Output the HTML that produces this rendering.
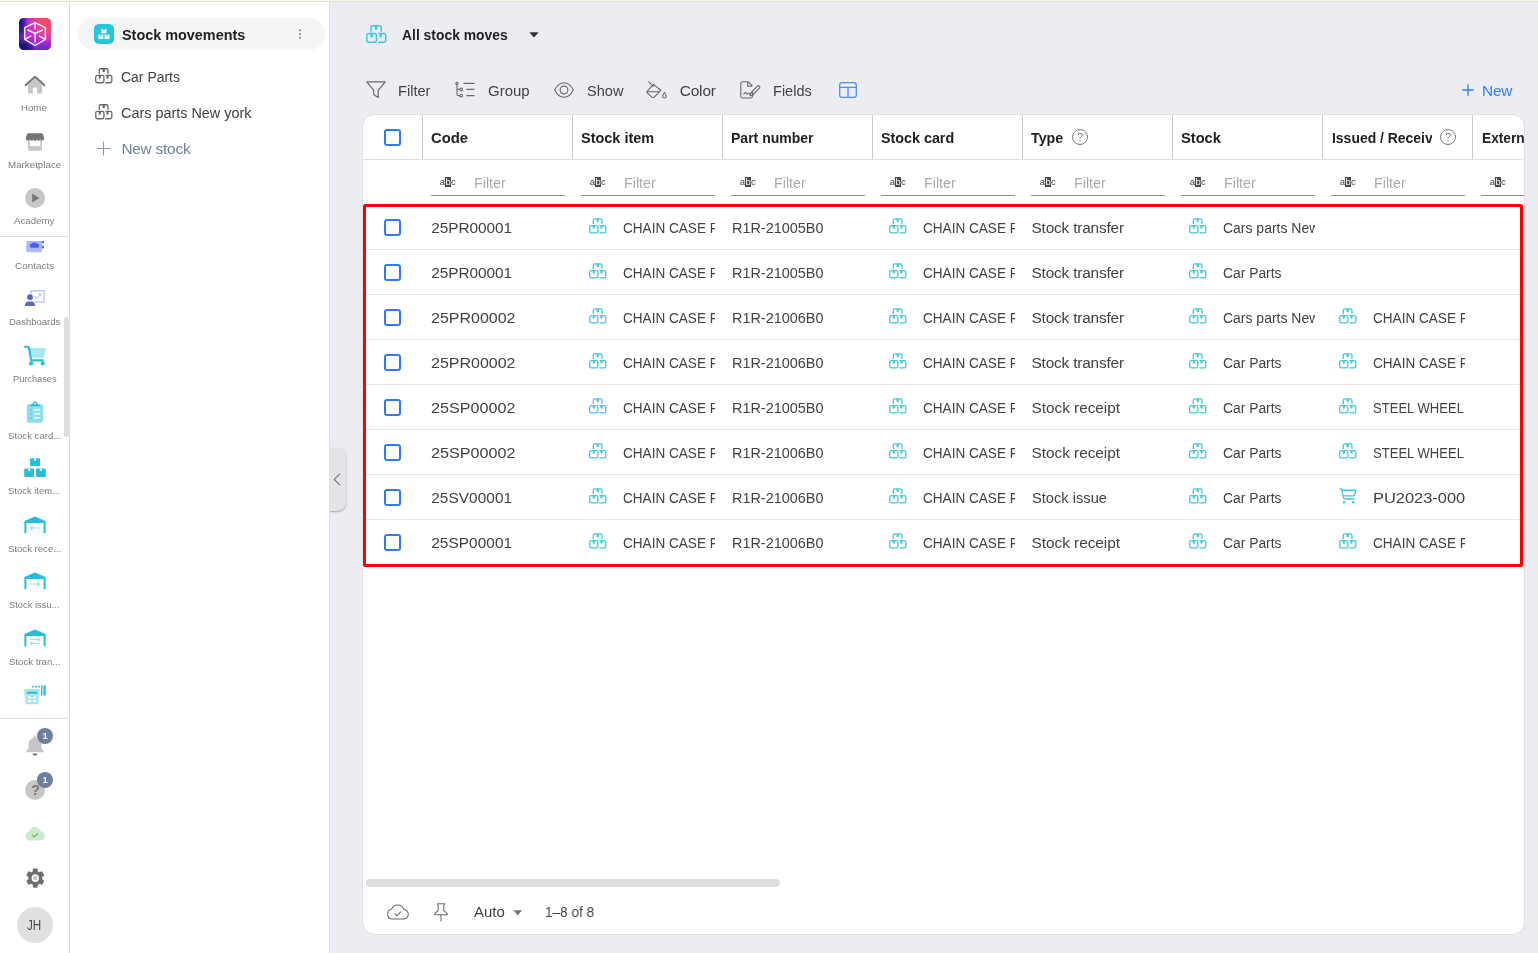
<!DOCTYPE html>
<html lang="en"><head><meta charset="utf-8"><title>Stock movements</title>
<style>
*{box-sizing:border-box;margin:0;padding:0}
html,body{width:1538px;height:953px;overflow:hidden;background:#ecedf3;font-family:"Liberation Sans",sans-serif;}
#app{position:absolute;left:0;top:0;width:1538px;height:953px;will-change:transform}
.t{position:absolute;white-space:nowrap;line-height:1;display:block}
.a{position:absolute;display:block}
svg{position:absolute;display:block;overflow:visible}
.clip{position:absolute;overflow:hidden;top:0;height:953px}
</style></head>
<body><div id="app">
<div class="a" style="left:0;top:0;width:69px;height:953px;background:#fff"></div>
<div class="a" style="left:69px;top:0;width:1px;height:953px;background:#e0e0e0"></div>
<div class="a" style="left:70px;top:0;width:259px;height:953px;background:#fff"></div>
<div class="a" style="left:329px;top:0;width:1px;height:953px;background:#e0e0e1"></div>
<div class="a" style="left:19px;top:18px;width:32px;height:32px;border-radius:4.500px;background:radial-gradient(ellipse 84% 85% at 100% 0%,#f2486a 0%,#f0486c 42%,rgba(236,72,128,.75) 62%,rgba(220,60,190,0) 100%),radial-gradient(ellipse 45% 42% at 8% 100%,#17126f 0%,#1d1683 45%,rgba(40,25,150,0) 100%),radial-gradient(ellipse 30% 70% at 0% 15%,#1b1580 0%,#2a1a9a 40%,rgba(60,30,180,0) 100%),linear-gradient(180deg,#b624e8 0%,#c02ae6 55%,#8a28d6 85%,#6e24c8 100%)"></div>
<svg style="left:19px;top:18px" width="32" height="32" viewBox="0 0 32 32" fill="none" stroke="#fff" stroke-opacity=".93" stroke-width="1.450" stroke-linejoin="round" stroke-linecap="round"><path d="M16.100 4.600L26.400 9.600V21.300L16.100 27.500 5.800 21.300V9.600z"/><path d="M16.100 15.500l7.400-3.500M16.100 15.500L8.800 12M16.100 15.500v8.800M16.100 5v5.700M6.200 21.200l5.600-3.100M26 21.200l-5.600-3.100"/></svg>
<svg style="left:24px;top:75px" width="22" height="20" viewBox="0 0 22 20"><path d="M4 9.5L11 3.2l7 6.3V17a1.6 1.6 0 0 1-1.6 1.6H13.2V13.4a1 1 0 0 0-1-1H9.8a1 1 0 0 0-1 1v5.2H5.6A1.6 1.6 0 0 1 4 17z" fill="#c6c6c6"/><path d="M1.6 10.2L11 1.8l9.4 8.4" fill="none" stroke="#757575" stroke-width="2" stroke-linecap="round" stroke-linejoin="round"/></svg>
<span class="t" style="left:21.40px;top:103px;line-height:10px;font-size:9px;color:#7c7c7c;transform:scaleX(1.0747);transform-origin:0 0;">Home</span>
<svg style="left:25px;top:132px" width="20" height="20" viewBox="0 0 20 20"><path d="M3 7.5h14v9.6a1.6 1.6 0 0 1-1.6 1.6H4.6A1.6 1.6 0 0 1 3 17.1z" fill="#c6c6c6"/><rect x="4.8" y="8.5" width="10.4" height="5.6" fill="#fff"/><path d="M3.2 1.2h13.6a1 1 0 0 1 .9.6l1.5 3.8v1a2 2 0 0 1-3.9.6 2 2 0 0 1-3.5.3 2 2 0 0 1-3.6 0 2 2 0 0 1-3.5-.3A2 2 0 0 1 .8 6.600v-1l1.500-3.800a1 1 0 0 1 .9-.6z" fill="#757575"/></svg>
<span class="t" style="left:7.80px;top:160px;line-height:10px;font-size:9px;color:#7c7c7c;transform:scaleX(1.0851);transform-origin:0 0;">Marketplace</span>
<svg style="left:25px;top:188px" width="20" height="20" viewBox="0 0 20 20"><circle cx="10" cy="10" r="10" fill="#c6c6c6"/><path d="M7.2 5.600l7.200 4.400-7.200 4.400z" fill="#757575"/></svg>
<span class="t" style="left:14.30px;top:216px;line-height:10px;font-size:9px;color:#7c7c7c;transform:scaleX(1.0745);transform-origin:0 0;">Academy</span>
<div class="a" style="left:0;top:236px;width:69px;height:1px;background:#e0e0e0"></div>
<div class="a" style="left:0;top:240.600px;width:69px;height:14px;overflow:hidden"><svg style="left:26px;top:-6px" width="19" height="18" viewBox="0 0 19 18"><rect x="0.300" y="0" width="15.700" height="17.200" rx="1.800" fill="#adb7fb"/><path d="M6 8.600c.6-.7 1.500-1 2.500-1s1.900.3 2.500 1c1.300.2 2.200 1 2.200 2.100s-1 2.100-2.300 2.100H6.100c-1.300 0-2.300-.9-2.300-2.100s.9-1.900 2.200-2.100z" fill="#4a5df0"/><rect x="15.900" y="5.400" width="2.100" height="3" rx="0.800" fill="#5b6cf3"/><rect x="15.900" y="10.600" width="2.100" height="3" rx="0.800" fill="#5b6cf3"/></svg></div>
<span class="t" style="left:14.80px;top:261px;line-height:10px;font-size:9px;color:#7c7c7c;transform:scaleX(1.1034);transform-origin:0 0;">Contacts</span>
<svg style="left:24px;top:289px" width="22" height="18" viewBox="0 0 22 18"><rect x="7.100" y="1.800" width="13.100" height="11.200" rx="0.600" fill="#fff" stroke="#c3c8f0" stroke-width="1.600"/><path d="M10.600 7.300l2.200 1.800 4-4M14.600 4.900h2.400v2.400" fill="none" stroke="#c3c8f0" stroke-width="1.200"/><circle cx="6" cy="8.100" r="3.500" fill="#fff"/><circle cx="6" cy="8.100" r="2.900" fill="#5463c4"/><path d="M0.300 17.700v-1.500c0-2.600 1.800-4.400 4.400-4.400h2.600c2.600 0 4.400 1.800 4.400 4.400v1.500z" fill="#fff"/><path d="M1 17.100v-.9c0-2.200 1.500-3.800 3.700-3.800h2.600c2.200 0 3.700 1.600 3.700 3.800v.9z" fill="#5c6bc0"/></svg>
<span class="t" style="left:8.70px;top:317px;line-height:10px;font-size:9px;color:#7c7c7c;transform:scaleX(1.0570);transform-origin:0 0;">Dashboards</span>
<svg style="left:23px;top:344px" width="24" height="22" viewBox="0 0 24 22"><path d="M6.600 4h16.500l-2.300 9.800H8.600z" fill="#a8e7f0"/><path d="M2 2.750h2.600c.8 0 1.200.4 1.400 1.200L8.100 16.300h11.800" fill="none" stroke="#26c0d6" stroke-width="2.200" stroke-linecap="round" stroke-linejoin="round"/><circle cx="8.100" cy="19.400" r="2.100" fill="#26c0d6"/><circle cx="19.700" cy="19.400" r="2.100" fill="#26c0d6"/></svg>
<span class="t" style="left:12.60px;top:374px;line-height:10px;font-size:9px;color:#7c7c7c;transform:scaleX(1.0253);transform-origin:0 0;">Purchases</span>
<svg style="left:26px;top:400.800px" width="18" height="22.400" viewBox="0 0 18 22.400"><rect x="0.800" y="3" width="16.400" height="18.800" rx="2.400" fill="#8fdfeb"/><path d="M3.400 5.300l2.400-1.700c.6-.4.900-.9 1.200-1.500C7.400 1 8.100.3 9 .3s1.600.7 2 1.800c.3.600.6 1.100 1.200 1.500l2.400 1.700z" fill="#26c0d6"/><circle cx="9" cy="2.600" r="0.950" fill="#fff"/><g fill="#fff" fill-opacity=".92"><rect x="7.900" y="7.900" width="6.200" height="1.700" rx="0.400"/><rect x="7.900" y="11.900" width="6.200" height="1.700" rx="0.400"/><rect x="7.900" y="15.900" width="6.200" height="1.700" rx="0.400"/></g><g fill="none" stroke="#26c0d6" stroke-width="0.900"><path d="M3.900 8.800l.8.800 1.300-1.500M3.900 12.800l.8.800 1.300-1.500M3.900 16.800l.8.800 1.300-1.500"/></g></svg>
<span class="t" style="left:7.60px;top:431px;line-height:10px;font-size:9px;color:#7c7c7c;transform:scaleX(1.0636);transform-origin:0 0;">Stock card...</span>
<svg style="left:24px;top:458.400px" width="22" height="19.200" viewBox="0 0 22 19.200" fill="#26c0d6"><rect x="6.100" y="0.200" width="9.900" height="7.900" rx="1.100"/><rect x="0.200" y="10.600" width="9.800" height="8.400" rx="1.100"/><rect x="11.900" y="10.600" width="9.900" height="8.400" rx="1.100"/><g fill="#d8f4f8"><path d="M10 0.200h2.100v2.700l-1.050-.6-1.050.6z"/><path d="M4.100 10.600h2.100v2.700l-1.050-.6-1.050.6z"/><path d="M15.800 10.600h2.100v2.700l-1.050-.6-1.050.6z"/></g></svg>
<span class="t" style="left:8.00px;top:486px;line-height:10px;font-size:9px;color:#7c7c7c;transform:scaleX(1.0500);transform-origin:0 0;">Stock item...</span>
<svg style="left:24px;top:516px" width="22" height="18" viewBox="0 0 22 18"><path d="M0.400 17.300V4.900L11 0.600l10.600 4.300v12.400h-2V6.900H2.400v10.400z" fill="#26c0d6"/><path d="M16.400 12H6.400M8.800 9.800L6.200 12l2.600 2.200" fill="none" stroke="#9fe3ee" stroke-width="1.200"/></svg>
<span class="t" style="left:7.60px;top:544px;line-height:10px;font-size:9px;color:#7c7c7c;transform:scaleX(1.0636);transform-origin:0 0;">Stock rece...</span>
<svg style="left:24px;top:572px" width="22" height="18" viewBox="0 0 22 18"><path d="M0.400 17.300V4.900L11 0.600l10.600 4.300v12.400h-2V6.900H2.400v10.400z" fill="#26c0d6"/><path d="M5.600 12h10M13.200 9.800l2.600 2.200-2.600 2.200" fill="none" stroke="#9fe3ee" stroke-width="1.200"/></svg>
<span class="t" style="left:9.20px;top:600px;line-height:10px;font-size:9px;color:#7c7c7c;transform:scaleX(1.0390);transform-origin:0 0;">Stock issu...</span>
<svg style="left:24px;top:629px" width="22" height="18" viewBox="0 0 22 18"><path d="M0.400 17.300V4.900L11 0.600l10.600 4.300v12.400h-2V6.900H2.400v10.400z" fill="#26c0d6"/><path d="M6 10.400h9.600M13.600 8.600l2.200 1.800-2.200 1.800M16 14.400H6.400M8.400 12.600l-2.200 1.800 2.200 1.800" fill="none" stroke="#9fe3ee" stroke-width="1.100"/></svg>
<span class="t" style="left:8.70px;top:657px;line-height:10px;font-size:9px;color:#7c7c7c;transform:scaleX(1.0684);transform-origin:0 0;">Stock tran...</span>
<svg style="left:24px;top:684px" width="22" height="21" viewBox="0 0 22 21"><path d="M0.200 5h15.500v3.600l-1.200 10.300a1.600 1.600 0 0 1-1.600 1.400H3.200a1.600 1.600 0 0 1-1.600-1.400L0.200 8.600z" fill="#a8e7f0"/><rect x="3" y="7.600" width="10.200" height="2.100" rx="0.300" fill="#26c0d6"/><g fill="#fff"><rect x="4" y="12.400" width="3.100" height="2.100"/><rect x="9" y="12.400" width="3.100" height="2.100"/><rect x="4" y="16" width="3.100" height="2.100"/><rect x="9" y="16" width="3.100" height="2.100"/></g><g fill="#26c0d6"><rect x="17" y="1.400" width="1.400" height="10.200"/><rect x="19.400" y="1.400" width="2.300" height="10.200"/><rect x="8.100" y="1.800" width="1.700" height="1.700"/><rect x="11.100" y="1.800" width="1.900" height="1.700"/><rect x="14.100" y="1.800" width="1.700" height="1.700"/></g></svg>
<div class="a" style="left:0;top:718px;width:69px;height:1px;background:#e0e0e0"></div>
<div class="a" style="left:64px;top:316.800px;width:5px;height:120.400px;border-radius:2.500px;background:#dddddd"></div>
<svg style="left:24px;top:735px" width="22" height="22" viewBox="0 0 20 22" preserveAspectRatio="none"><path d="M10 1.200c.8 0 1.400.6 1.400 1.400v.5c2.800.7 4.400 3 4.400 5.900v4.600l2.200 2.600v1H2v-1l2.200-2.600V9c0-2.900 1.600-5.200 4.400-5.900v-.5c0-.8.600-1.400 1.400-1.400z" fill="#c6c6c6"/><path d="M7.800 18.600h4.400a2.200 2.200 0 0 1-4.400 0z" fill="#757575"/></svg>
<div class="a" style="left:37px;top:728px;width:16px;height:16px;border-radius:8px;background:#6d7f9c"></div><span class="t" style="left:42.40px;top:730px;line-height:11px;font-size:9.5px;color:#fff;font-weight:700;">1</span>
<div class="a" style="left:25px;top:780px;width:20px;height:20px;border-radius:10px;background:#c6c6c6"></div>
<span class="t" style="left:31.20px;top:782px;line-height:16px;font-size:14px;color:#757575;font-weight:700;">?</span>
<div class="a" style="left:37px;top:772px;width:16px;height:16px;border-radius:8px;background:#6d7f9c"></div><span class="t" style="left:42.40px;top:774px;line-height:11px;font-size:9.5px;color:#fff;font-weight:700;">1</span>
<svg style="left:25px;top:826px" width="20" height="15" viewBox="0 0 20 15"><path d="M5 14.600a4.600 4.600 0 0 1-.8-9.100A5.800 5.800 0 0 1 15.400 5a4.800 4.800 0 0 1-.4 9.600z" fill="#cdeacd"/><path d="M7 8.800l2.200 2.200 3.800-3.800" fill="none" stroke="#6cc070" stroke-width="1.300"/></svg>
<svg style="left:25.700px;top:867.700px" width="18.600" height="20.200" viewBox="2.250 2 19.500 20" preserveAspectRatio="none"><path fill="#6e6e6e" d="M19.140 12.940c.04-.3.060-.61.060-.94 0-.32-.02-.64-.07-.94l2.030-1.580c.18-.14.230-.41.120-.61l-1.920-3.320c-.12-.22-.37-.29-.59-.22l-2.390.96c-.5-.38-1.030-.7-1.620-.94l-.36-2.540c-.04-.24-.24-.41-.48-.41h-3.840c-.24 0-.43.170-.47.410l-.36 2.540c-.59.240-1.130.57-1.620.94l-2.390-.96c-.22-.08-.47 0-.59.220L2.740 8.870c-.12.210-.08.470.12.610l2.030 1.580c-.05.300-.09.630-.09.940s.02.640.07.940l-2.030 1.580c-.18.140-.23.410-.12.610l1.920 3.320c.12.220.37.290.59.220l2.390-.96c.5.380 1.030.7 1.620.94l.36 2.540c.05.240.24.410.48.410h3.840c.24 0 .44-.17.470-.41l.36-2.540c.59-.24 1.130-.56 1.620-.94l2.390.96c.22.080.47 0 .59-.22l1.920-3.320c.12-.22.070-.47-.12-.61l-2.010-1.580z"/><circle cx="12" cy="12" r="3.900" fill="#fff"/><circle cx="12" cy="12" r="2.400" fill="#c6c6c6"/></svg>
<div class="a" style="left:17px;top:907px;width:36px;height:36px;border-radius:18px;background:#e0e0e0"></div>
<span class="t" style="left:27.10px;top:916px;line-height:17px;font-size:15.4px;color:#4a4a4a;transform:scaleX(0.7596);transform-origin:0 0;">JH</span>
<div class="a" style="left:78px;top:18px;width:247px;height:32px;border-radius:16px;background:#f5f5f5"></div>
<div class="a" style="left:94px;top:24px;width:20px;height:20px;border-radius:5px;background:#25c5da"></div>
<svg style="left:98.100px;top:29.100px" width="11.900" height="10" viewBox="0 0 12 10.800" fill="#fff"><path d="M3.300 0h5.400v4.600H3.300z"/><path d="M0 5.900h5.400v4.900H0z"/><path d="M6.600 5.900H12v4.900H6.600z"/><g fill="#26c3da"><rect x="5.300" y="0" width="1.400" height="1.800"/><rect x="2" y="5.900" width="1.400" height="1.800"/><rect x="8.600" y="5.900" width="1.400" height="1.800"/></g></svg>
<span class="t" style="left:122.20px;top:26px;line-height:17px;font-size:15.4px;color:#212121;font-weight:700;transform:scaleX(0.9361);transform-origin:0 0;">Stock movements</span>
<svg style="left:298px;top:29px" width="4" height="10" viewBox="0 0 4 10" fill="#757575"><circle cx="2" cy="1.300" r="0.950"/><circle cx="2" cy="5" r="0.950"/><circle cx="2" cy="8.700" r="0.950"/></svg>
<svg style="left:95px;top:68px" width="17.5" height="15.5" viewBox="0 0 20.5 18" fill="none" stroke="#666" stroke-width="1.5" stroke-linejoin="round"><path d="M5 6.8V2.6a1.8 1.8 0 0 1 1.8-1.8h6.6a1.8 1.8 0 0 1 1.8 1.8v4.2"/><path d="M8.9 1v2.6a1.3 1.3 0 0 0 2.6 0V1z" fill="#666" stroke="none"/><rect x="0.85" y="8.6" width="9.6" height="8.6" rx="2"/><path d="M4.4 8.8v2.4a1.25 1.25 0 0 0 2.5 0V8.8z" fill="#666" stroke="none"/><path d="M12.3 8.6h5.4a2 2 0 0 1 2 2v4.6a2 2 0 0 1-2 2h-5.6"/><path d="M13.4 8.8v2.4a1.25 1.25 0 0 0 2.5 0V8.8z" fill="#666" stroke="none"/></svg>
<span class="t" style="left:121.40px;top:68px;line-height:17px;font-size:15.4px;color:#424242;transform:scaleX(0.9073);transform-origin:0 0;">Car Parts</span>
<svg style="left:95px;top:104px" width="17.5" height="15.5" viewBox="0 0 20.5 18" fill="none" stroke="#666" stroke-width="1.5" stroke-linejoin="round"><path d="M5 6.8V2.6a1.8 1.8 0 0 1 1.8-1.8h6.6a1.8 1.8 0 0 1 1.8 1.8v4.2"/><path d="M8.9 1v2.6a1.3 1.3 0 0 0 2.6 0V1z" fill="#666" stroke="none"/><rect x="0.85" y="8.6" width="9.6" height="8.6" rx="2"/><path d="M4.4 8.8v2.4a1.25 1.25 0 0 0 2.5 0V8.8z" fill="#666" stroke="none"/><path d="M12.3 8.6h5.4a2 2 0 0 1 2 2v4.6a2 2 0 0 1-2 2h-5.6"/><path d="M13.4 8.8v2.4a1.25 1.25 0 0 0 2.5 0V8.8z" fill="#666" stroke="none"/></svg>
<span class="t" style="left:121.40px;top:104px;line-height:17px;font-size:15.4px;color:#424242;transform:scaleX(0.9353);transform-origin:0 0;">Cars parts New york</span>
<svg style="left:96px;top:141px" width="15" height="15" viewBox="0 0 15 15" stroke="#8a98b3" stroke-width="1.100"><path d="M7.500 0.500v14M0.500 7.500h14"/></svg>
<span class="t" style="left:121.40px;top:140px;line-height:17px;font-size:15.4px;color:#71819f;letter-spacing:-0.221px;">New stock</span>
<div class="a" style="left:330px;top:440px;width:24px;height:80px;overflow:hidden"><div class="a" style="left:-2px;top:8px;width:17.800px;height:62.600px;border-radius:0 8.500px 8.500px 0;background:#e4e4e6;box-shadow:0 1px 2px rgba(0,0,0,.3)"></div></div>
<svg style="left:333px;top:473px" width="8" height="13" viewBox="0 0 8 13" fill="none" stroke="#757575" stroke-width="1.100"><path d="M7 0.600L1.200 6.400 7 12.200"/></svg>
<svg style="left:366px;top:25px" width="20.5" height="18" viewBox="0 0 20.5 18" fill="none" stroke="#3dcadb" stroke-width="1.5" stroke-linejoin="round"><path d="M5 6.8V2.6a1.8 1.8 0 0 1 1.8-1.8h6.6a1.8 1.8 0 0 1 1.8 1.8v4.2"/><path d="M8.9 1v2.6a1.3 1.3 0 0 0 2.6 0V1z" fill="#3dcadb" stroke="none"/><rect x="0.85" y="8.6" width="9.6" height="8.6" rx="2"/><path d="M4.4 8.8v2.4a1.25 1.25 0 0 0 2.5 0V8.8z" fill="#3dcadb" stroke="none"/><path d="M12.3 8.6h5.4a2 2 0 0 1 2 2v4.6a2 2 0 0 1-2 2h-5.6"/><path d="M13.4 8.8v2.4a1.25 1.25 0 0 0 2.5 0V8.8z" fill="#3dcadb" stroke="none"/></svg>
<span class="t" style="left:402.00px;top:26px;line-height:17px;font-size:15.4px;color:#212121;font-weight:700;transform:scaleX(0.9022);transform-origin:0 0;">All stock moves</span>
<svg style="left:529px;top:32px" width="10" height="6" viewBox="0 0 10 6"><path d="M0.300 0.200h9.400L5 5.600z" fill="#333"/></svg>
<svg style="left:366px;top:81px" width="20" height="18" viewBox="0 0 20 18" fill="none" stroke="#6a6a6a" stroke-width="1.150" stroke-linejoin="round"><path d="M0.800 0.800h18.400l-7 8.600v7.200l-4.400-2.800V9.400z"/></svg>
<span class="t" style="left:398.30px;top:82px;line-height:17px;font-size:15.4px;color:#424242;transform:scaleX(0.9496);transform-origin:0 0;">Filter</span>
<svg style="left:455px;top:82px" width="20" height="16" viewBox="0 0 20 16" fill="none" stroke="#6a6a6a" stroke-width="1.100"><path d="M2 2.600v9.600a1.400 1.400 0 0 0 1.400 1.400h1.400M2 7.400h2.800M8.400 1.400h11M11.400 7.400h8M11.400 13.600h8"/><circle cx="2" cy="1.500" r="1.100"/><circle cx="6.200" cy="7.400" r="1.300"/><circle cx="6.200" cy="13.600" r="1.300"/></svg>
<span class="t" style="left:487.80px;top:82px;line-height:17px;font-size:15.4px;color:#424242;transform:scaleX(0.9740);transform-origin:0 0;">Group</span>
<svg style="left:554px;top:82px" width="20" height="16" viewBox="0 0 20 16" fill="none" stroke="#6a6a6a" stroke-width="1.100"><path d="M0.700 8C3 3.200 6.400 0.800 10 0.800S17 3.200 19.300 8C17 12.800 13.600 15.200 10 15.200S3 12.800 0.700 8z"/><circle cx="10" cy="8" r="3.900"/></svg>
<span class="t" style="left:586.50px;top:82px;line-height:17px;font-size:15.4px;color:#424242;transform:scaleX(0.9462);transform-origin:0 0;">Show</span>
<svg style="left:646px;top:81px" width="22" height="18" viewBox="0 0 22 18" fill="none" stroke="#6a6a6a" stroke-width="1.100" stroke-linejoin="round"><path d="M2.400 0.600l5 5M7.600 3.400L1.200 10.200a1.200 1.200 0 0 0 0 1.600l4.800 4.400a1.600 1.600 0 0 0 2.200 0l6.600-6.800zM1 10.800h13"/><path d="M18.400 11.400c1 1.600 1.800 2.800 1.800 3.800a1.800 1.800 0 0 1-3.600 0c0-1 .8-2.200 1.800-3.800z"/></svg>
<span class="t" style="left:679.70px;top:82px;line-height:17px;font-size:15.4px;color:#424242;letter-spacing:-0.127px;">Color</span>
<svg style="left:740px;top:81px" width="21" height="18" viewBox="0 0 21 18" fill="none" stroke="#6a6a6a" stroke-width="1.100" stroke-linejoin="round"><path d="M12.400 10.800v4.400a1.800 1.800 0 0 1-1.800 1.800H2.600a1.800 1.800 0 0 1-1.800-1.800V2.600A1.800 1.800 0 0 1 2.600 0.800h5.600l4.200 4.200M7.800 0.800v4.400h4.400"/><path d="M3.400 13.600c1-.2 1.400-2.400 2.200-2.400s.4 2 1.200 2 .8-1 1.600-1 .6.800 2 .8"/><path d="M17.400 5.200a1.400 1.400 0 0 1 2 2l-6.600 6.800-2.800.8.800-2.800z"/></svg>
<span class="t" style="left:773.00px;top:82px;line-height:17px;font-size:15.4px;color:#424242;transform:scaleX(0.9445);transform-origin:0 0;">Fields</span>
<svg style="left:839px;top:82px" width="18" height="16" viewBox="0 0 18 16" fill="none" stroke="#4d8df6" stroke-width="1.300"><rect x="0.700" y="0.700" width="16.600" height="14.600" rx="2.400"/><path d="M0.750 5.400h16.500M9 5.400v9.800"/></svg>
<svg style="left:1462px;top:84px" width="12" height="12" viewBox="0 0 12 12" stroke="#2f7bf5" stroke-width="1.300"><path d="M6 0.300v11.400M0.300 6h11.400"/></svg>
<span class="t" style="left:1482.00px;top:82px;line-height:17px;font-size:15.4px;color:#2f7bf5;letter-spacing:-0.169px;">New</span>
<div class="a" style="left:362px;top:114px;width:1163px;height:821px;border-radius:13px;background:#fff;border:1px solid #e0e0e2"></div>
<div class="a" style="left:363px;top:159px;width:1161px;height:1px;background:#e0e0e0"></div>
<div class="a" style="left:422px;top:115px;width:1px;height:44px;background:#c8c8c8"></div>
<div class="a" style="left:572px;top:115px;width:1px;height:44px;background:#c8c8c8"></div>
<div class="a" style="left:722px;top:115px;width:1px;height:44px;background:#c8c8c8"></div>
<div class="a" style="left:872px;top:115px;width:1px;height:44px;background:#c8c8c8"></div>
<div class="a" style="left:1022px;top:115px;width:1px;height:44px;background:#c8c8c8"></div>
<div class="a" style="left:1172px;top:115px;width:1px;height:44px;background:#c8c8c8"></div>
<div class="a" style="left:1322px;top:115px;width:1px;height:44px;background:#c8c8c8"></div>
<div class="a" style="left:1472px;top:115px;width:1px;height:44px;background:#c8c8c8"></div>
<div class="a" style="left:384px;top:129px;width:17px;height:17px;border:2px solid #2f7bf5;border-radius:3px"></div>
<span class="t" style="left:431.40px;top:129px;line-height:17px;font-size:15.4px;color:#212121;font-weight:700;transform:scaleX(0.9636);transform-origin:0 0;">Code</span>
<span class="t" style="left:581.30px;top:129px;line-height:17px;font-size:15.4px;color:#212121;font-weight:700;transform:scaleX(0.9398);transform-origin:0 0;">Stock item</span>
<span class="t" style="left:731.40px;top:129px;line-height:17px;font-size:15.4px;color:#212121;font-weight:700;transform:scaleX(0.9106);transform-origin:0 0;">Part number</span>
<span class="t" style="left:881.30px;top:129px;line-height:17px;font-size:15.4px;color:#212121;font-weight:700;transform:scaleX(0.9297);transform-origin:0 0;">Stock card</span>
<span class="t" style="left:1031.40px;top:129px;line-height:17px;font-size:15.4px;color:#212121;font-weight:700;transform:scaleX(0.9281);transform-origin:0 0;">Type</span>
<span class="t" style="left:1181.30px;top:129px;line-height:17px;font-size:15.4px;color:#212121;font-weight:700;transform:scaleX(0.9508);transform-origin:0 0;">Stock</span>
<div class="a" style="left:1072px;top:129px;width:16px;height:16px;border-radius:8px;border:1px solid #7a7a7a"></div><span class="t" style="left:1077.30px;top:131px;line-height:12px;font-size:10.5px;color:#7a7a7a;">?</span>
<div class="clip" style="left:1322px;width:110.300px"><span class="t" style="left:9.50px;top:129px;line-height:17px;font-size:15.4px;color:#212121;font-weight:700;transform:scaleX(0.9056);transform-origin:0 0;">Issued / Received</span></div>
<div class="a" style="left:1440px;top:129px;width:16px;height:16px;border-radius:8px;border:1px solid #7a7a7a"></div><span class="t" style="left:1445.30px;top:131px;line-height:12px;font-size:10.5px;color:#7a7a7a;">?</span>
<div class="clip" style="left:1472px;width:52px"><span class="t" style="left:9.50px;top:129px;line-height:17px;font-size:15.4px;color:#212121;font-weight:700;transform:scaleX(0.8908);transform-origin:0 0;">External document</span></div>
<span class="t" style="left:439.80px;top:176px;line-height:11px;font-size:9.5px;color:#3c3c3c;">a</span>
<div class="a" style="left:445.2px;top:177.400px;width:5.400px;height:9.200px;background:#4a4a4a"></div>
<span class="t" style="left:445.40px;top:176px;line-height:11px;font-size:9.5px;color:#fff;">b</span>
<span class="t" style="left:450.90px;top:176px;line-height:11px;font-size:9.5px;color:#3c3c3c;">c</span>
<span class="t" style="left:473.50px;top:174px;line-height:17px;font-size:15.4px;color:#ababab;transform:scaleX(0.9291);transform-origin:0 0;">Filter</span>
<div class="a" style="left:431px;top:195px;width:134px;height:1px;background:#8c8c8c"></div>
<span class="t" style="left:589.80px;top:176px;line-height:11px;font-size:9.5px;color:#3c3c3c;">a</span>
<div class="a" style="left:595.2px;top:177.400px;width:5.400px;height:9.200px;background:#4a4a4a"></div>
<span class="t" style="left:595.40px;top:176px;line-height:11px;font-size:9.5px;color:#fff;">b</span>
<span class="t" style="left:600.90px;top:176px;line-height:11px;font-size:9.5px;color:#3c3c3c;">c</span>
<span class="t" style="left:623.50px;top:174px;line-height:17px;font-size:15.4px;color:#ababab;transform:scaleX(0.9291);transform-origin:0 0;">Filter</span>
<div class="a" style="left:581px;top:195px;width:134px;height:1px;background:#8c8c8c"></div>
<span class="t" style="left:739.80px;top:176px;line-height:11px;font-size:9.5px;color:#3c3c3c;">a</span>
<div class="a" style="left:745.2px;top:177.400px;width:5.400px;height:9.200px;background:#4a4a4a"></div>
<span class="t" style="left:745.40px;top:176px;line-height:11px;font-size:9.5px;color:#fff;">b</span>
<span class="t" style="left:750.90px;top:176px;line-height:11px;font-size:9.5px;color:#3c3c3c;">c</span>
<span class="t" style="left:773.50px;top:174px;line-height:17px;font-size:15.4px;color:#ababab;transform:scaleX(0.9291);transform-origin:0 0;">Filter</span>
<div class="a" style="left:731px;top:195px;width:134px;height:1px;background:#8c8c8c"></div>
<span class="t" style="left:889.80px;top:176px;line-height:11px;font-size:9.5px;color:#3c3c3c;">a</span>
<div class="a" style="left:895.2px;top:177.400px;width:5.400px;height:9.200px;background:#4a4a4a"></div>
<span class="t" style="left:895.40px;top:176px;line-height:11px;font-size:9.5px;color:#fff;">b</span>
<span class="t" style="left:900.90px;top:176px;line-height:11px;font-size:9.5px;color:#3c3c3c;">c</span>
<span class="t" style="left:923.50px;top:174px;line-height:17px;font-size:15.4px;color:#ababab;transform:scaleX(0.9291);transform-origin:0 0;">Filter</span>
<div class="a" style="left:881px;top:195px;width:134px;height:1px;background:#8c8c8c"></div>
<span class="t" style="left:1039.80px;top:176px;line-height:11px;font-size:9.5px;color:#3c3c3c;">a</span>
<div class="a" style="left:1045.2px;top:177.400px;width:5.400px;height:9.200px;background:#4a4a4a"></div>
<span class="t" style="left:1045.40px;top:176px;line-height:11px;font-size:9.5px;color:#fff;">b</span>
<span class="t" style="left:1050.90px;top:176px;line-height:11px;font-size:9.5px;color:#3c3c3c;">c</span>
<span class="t" style="left:1073.50px;top:174px;line-height:17px;font-size:15.4px;color:#ababab;transform:scaleX(0.9291);transform-origin:0 0;">Filter</span>
<div class="a" style="left:1031px;top:195px;width:134px;height:1px;background:#8c8c8c"></div>
<span class="t" style="left:1189.80px;top:176px;line-height:11px;font-size:9.5px;color:#3c3c3c;">a</span>
<div class="a" style="left:1195.2px;top:177.400px;width:5.400px;height:9.200px;background:#4a4a4a"></div>
<span class="t" style="left:1195.40px;top:176px;line-height:11px;font-size:9.5px;color:#fff;">b</span>
<span class="t" style="left:1200.90px;top:176px;line-height:11px;font-size:9.5px;color:#3c3c3c;">c</span>
<span class="t" style="left:1223.50px;top:174px;line-height:17px;font-size:15.4px;color:#ababab;transform:scaleX(0.9291);transform-origin:0 0;">Filter</span>
<div class="a" style="left:1181px;top:195px;width:134px;height:1px;background:#8c8c8c"></div>
<span class="t" style="left:1339.80px;top:176px;line-height:11px;font-size:9.5px;color:#3c3c3c;">a</span>
<div class="a" style="left:1345.2px;top:177.400px;width:5.400px;height:9.200px;background:#4a4a4a"></div>
<span class="t" style="left:1345.40px;top:176px;line-height:11px;font-size:9.5px;color:#fff;">b</span>
<span class="t" style="left:1350.90px;top:176px;line-height:11px;font-size:9.5px;color:#3c3c3c;">c</span>
<span class="t" style="left:1373.50px;top:174px;line-height:17px;font-size:15.4px;color:#ababab;transform:scaleX(0.9291);transform-origin:0 0;">Filter</span>
<div class="a" style="left:1331px;top:195px;width:134px;height:1px;background:#8c8c8c"></div>
<span class="t" style="left:1489.80px;top:176px;line-height:11px;font-size:9.5px;color:#3c3c3c;">a</span>
<div class="a" style="left:1495.2px;top:177.400px;width:5.400px;height:9.200px;background:#4a4a4a"></div>
<span class="t" style="left:1495.40px;top:176px;line-height:11px;font-size:9.5px;color:#fff;">b</span>
<span class="t" style="left:1500.90px;top:176px;line-height:11px;font-size:9.5px;color:#3c3c3c;">c</span>
<div class="a" style="left:1481px;top:195px;width:42.500px;height:1px;background:#8c8c8c"></div>
<div class="a" style="left:363px;top:249px;width:1161px;height:1px;background:#e6e7ed"></div>
<div class="a" style="left:384px;top:219px;width:17px;height:17px;border:2px solid #2f7bf5;border-radius:3px"></div>
<span class="t" style="left:431.20px;top:219px;line-height:17px;font-size:15.4px;color:#424242;letter-spacing:-0.044px;">25PR00001</span>
<svg style="left:589px;top:218px" width="17.5" height="15.8" viewBox="0 0 20.5 18" fill="none" stroke="#3dcadb" stroke-width="1.5" stroke-linejoin="round"><path d="M5 6.8V2.6a1.8 1.8 0 0 1 1.8-1.8h6.6a1.8 1.8 0 0 1 1.8 1.8v4.2"/><path d="M8.9 1v2.6a1.3 1.3 0 0 0 2.6 0V1z" fill="#3dcadb" stroke="none"/><rect x="0.85" y="8.6" width="9.6" height="8.6" rx="2"/><path d="M4.4 8.8v2.4a1.25 1.25 0 0 0 2.5 0V8.8z" fill="#3dcadb" stroke="none"/><path d="M12.3 8.6h5.4a2 2 0 0 1 2 2v4.6a2 2 0 0 1-2 2h-5.6"/><path d="M13.4 8.8v2.4a1.25 1.25 0 0 0 2.5 0V8.8z" fill="#3dcadb" stroke="none"/></svg>
<div class="clip" style="left:572px;width:143px"><span class="t" style="left:51.00px;top:219px;line-height:17px;font-size:15.4px;color:#424242;transform:scaleX(0.8817);transform-origin:0 0;">CHAIN CASE REAR</span></div>
<span class="t" style="left:731.50px;top:219px;line-height:17px;font-size:15.4px;color:#424242;transform:scaleX(0.9375);transform-origin:0 0;">R1R-21005B0</span>
<svg style="left:889px;top:218px" width="17.5" height="15.8" viewBox="0 0 20.5 18" fill="none" stroke="#3dcadb" stroke-width="1.5" stroke-linejoin="round"><path d="M5 6.8V2.6a1.8 1.8 0 0 1 1.8-1.8h6.6a1.8 1.8 0 0 1 1.8 1.8v4.2"/><path d="M8.9 1v2.6a1.3 1.3 0 0 0 2.6 0V1z" fill="#3dcadb" stroke="none"/><rect x="0.85" y="8.6" width="9.6" height="8.6" rx="2"/><path d="M4.4 8.8v2.4a1.25 1.25 0 0 0 2.5 0V8.8z" fill="#3dcadb" stroke="none"/><path d="M12.3 8.6h5.4a2 2 0 0 1 2 2v4.6a2 2 0 0 1-2 2h-5.6"/><path d="M13.4 8.8v2.4a1.25 1.25 0 0 0 2.5 0V8.8z" fill="#3dcadb" stroke="none"/></svg>
<div class="clip" style="left:872px;width:143px"><span class="t" style="left:51.00px;top:219px;line-height:17px;font-size:15.4px;color:#424242;transform:scaleX(0.8817);transform-origin:0 0;">CHAIN CASE REAR</span></div>
<span class="t" style="left:1031.50px;top:219px;line-height:17px;font-size:15.4px;color:#424242;letter-spacing:-0.186px;">Stock transfer</span>
<svg style="left:1189px;top:218px" width="17.5" height="15.8" viewBox="0 0 20.5 18" fill="none" stroke="#3dcadb" stroke-width="1.5" stroke-linejoin="round"><path d="M5 6.8V2.6a1.8 1.8 0 0 1 1.8-1.8h6.6a1.8 1.8 0 0 1 1.8 1.8v4.2"/><path d="M8.9 1v2.6a1.3 1.3 0 0 0 2.6 0V1z" fill="#3dcadb" stroke="none"/><rect x="0.85" y="8.6" width="9.6" height="8.6" rx="2"/><path d="M4.4 8.8v2.4a1.25 1.25 0 0 0 2.5 0V8.8z" fill="#3dcadb" stroke="none"/><path d="M12.3 8.6h5.4a2 2 0 0 1 2 2v4.6a2 2 0 0 1-2 2h-5.6"/><path d="M13.4 8.8v2.4a1.25 1.25 0 0 0 2.5 0V8.8z" fill="#3dcadb" stroke="none"/></svg>
<div class="clip" style="left:1172px;width:143px"><span class="t" style="left:51.00px;top:219px;line-height:17px;font-size:15.4px;color:#424242;transform:scaleX(0.9076);transform-origin:0 0;">Cars parts New york</span></div>
<div class="a" style="left:363px;top:294px;width:1161px;height:1px;background:#e6e7ed"></div>
<div class="a" style="left:384px;top:264px;width:17px;height:17px;border:2px solid #2f7bf5;border-radius:3px"></div>
<span class="t" style="left:431.20px;top:264px;line-height:17px;font-size:15.4px;color:#424242;letter-spacing:-0.044px;">25PR00001</span>
<svg style="left:589px;top:263px" width="17.5" height="15.8" viewBox="0 0 20.5 18" fill="none" stroke="#3dcadb" stroke-width="1.5" stroke-linejoin="round"><path d="M5 6.8V2.6a1.8 1.8 0 0 1 1.8-1.8h6.6a1.8 1.8 0 0 1 1.8 1.8v4.2"/><path d="M8.9 1v2.6a1.3 1.3 0 0 0 2.6 0V1z" fill="#3dcadb" stroke="none"/><rect x="0.85" y="8.6" width="9.6" height="8.6" rx="2"/><path d="M4.4 8.8v2.4a1.25 1.25 0 0 0 2.5 0V8.8z" fill="#3dcadb" stroke="none"/><path d="M12.3 8.6h5.4a2 2 0 0 1 2 2v4.6a2 2 0 0 1-2 2h-5.6"/><path d="M13.4 8.8v2.4a1.25 1.25 0 0 0 2.5 0V8.8z" fill="#3dcadb" stroke="none"/></svg>
<div class="clip" style="left:572px;width:143px"><span class="t" style="left:51.00px;top:264px;line-height:17px;font-size:15.4px;color:#424242;transform:scaleX(0.8817);transform-origin:0 0;">CHAIN CASE REAR</span></div>
<span class="t" style="left:731.50px;top:264px;line-height:17px;font-size:15.4px;color:#424242;transform:scaleX(0.9375);transform-origin:0 0;">R1R-21005B0</span>
<svg style="left:889px;top:263px" width="17.5" height="15.8" viewBox="0 0 20.5 18" fill="none" stroke="#3dcadb" stroke-width="1.5" stroke-linejoin="round"><path d="M5 6.8V2.6a1.8 1.8 0 0 1 1.8-1.8h6.6a1.8 1.8 0 0 1 1.8 1.8v4.2"/><path d="M8.9 1v2.6a1.3 1.3 0 0 0 2.6 0V1z" fill="#3dcadb" stroke="none"/><rect x="0.85" y="8.6" width="9.6" height="8.6" rx="2"/><path d="M4.4 8.8v2.4a1.25 1.25 0 0 0 2.5 0V8.8z" fill="#3dcadb" stroke="none"/><path d="M12.3 8.6h5.4a2 2 0 0 1 2 2v4.6a2 2 0 0 1-2 2h-5.6"/><path d="M13.4 8.8v2.4a1.25 1.25 0 0 0 2.5 0V8.8z" fill="#3dcadb" stroke="none"/></svg>
<div class="clip" style="left:872px;width:143px"><span class="t" style="left:51.00px;top:264px;line-height:17px;font-size:15.4px;color:#424242;transform:scaleX(0.8817);transform-origin:0 0;">CHAIN CASE REAR</span></div>
<span class="t" style="left:1031.50px;top:264px;line-height:17px;font-size:15.4px;color:#424242;letter-spacing:-0.186px;">Stock transfer</span>
<svg style="left:1189px;top:263px" width="17.5" height="15.8" viewBox="0 0 20.5 18" fill="none" stroke="#3dcadb" stroke-width="1.5" stroke-linejoin="round"><path d="M5 6.8V2.6a1.8 1.8 0 0 1 1.8-1.8h6.6a1.8 1.8 0 0 1 1.8 1.8v4.2"/><path d="M8.9 1v2.6a1.3 1.3 0 0 0 2.6 0V1z" fill="#3dcadb" stroke="none"/><rect x="0.85" y="8.6" width="9.6" height="8.6" rx="2"/><path d="M4.4 8.8v2.4a1.25 1.25 0 0 0 2.5 0V8.8z" fill="#3dcadb" stroke="none"/><path d="M12.3 8.6h5.4a2 2 0 0 1 2 2v4.6a2 2 0 0 1-2 2h-5.6"/><path d="M13.4 8.8v2.4a1.25 1.25 0 0 0 2.5 0V8.8z" fill="#3dcadb" stroke="none"/></svg>
<span class="t" style="left:1222.80px;top:264px;line-height:17px;font-size:15.4px;color:#424242;transform:scaleX(0.8996);transform-origin:0 0;">Car Parts</span>
<div class="a" style="left:363px;top:339px;width:1161px;height:1px;background:#e6e7ed"></div>
<div class="a" style="left:384px;top:309px;width:17px;height:17px;border:2px solid #2f7bf5;border-radius:3px"></div>
<span class="t" style="left:431.20px;top:309px;line-height:17px;font-size:15.4px;color:#424242;transform:scaleX(1.0387);transform-origin:0 0;">25PR00002</span>
<svg style="left:589px;top:308px" width="17.5" height="15.8" viewBox="0 0 20.5 18" fill="none" stroke="#3dcadb" stroke-width="1.5" stroke-linejoin="round"><path d="M5 6.8V2.6a1.8 1.8 0 0 1 1.8-1.8h6.6a1.8 1.8 0 0 1 1.8 1.8v4.2"/><path d="M8.9 1v2.6a1.3 1.3 0 0 0 2.6 0V1z" fill="#3dcadb" stroke="none"/><rect x="0.85" y="8.6" width="9.6" height="8.6" rx="2"/><path d="M4.4 8.8v2.4a1.25 1.25 0 0 0 2.5 0V8.8z" fill="#3dcadb" stroke="none"/><path d="M12.3 8.6h5.4a2 2 0 0 1 2 2v4.6a2 2 0 0 1-2 2h-5.6"/><path d="M13.4 8.8v2.4a1.25 1.25 0 0 0 2.5 0V8.8z" fill="#3dcadb" stroke="none"/></svg>
<div class="clip" style="left:572px;width:143px"><span class="t" style="left:51.00px;top:309px;line-height:17px;font-size:15.4px;color:#424242;transform:scaleX(0.8817);transform-origin:0 0;">CHAIN CASE FRONT</span></div>
<span class="t" style="left:731.50px;top:309px;line-height:17px;font-size:15.4px;color:#424242;transform:scaleX(0.9375);transform-origin:0 0;">R1R-21006B0</span>
<svg style="left:889px;top:308px" width="17.5" height="15.8" viewBox="0 0 20.5 18" fill="none" stroke="#3dcadb" stroke-width="1.5" stroke-linejoin="round"><path d="M5 6.8V2.6a1.8 1.8 0 0 1 1.8-1.8h6.6a1.8 1.8 0 0 1 1.8 1.8v4.2"/><path d="M8.9 1v2.6a1.3 1.3 0 0 0 2.6 0V1z" fill="#3dcadb" stroke="none"/><rect x="0.85" y="8.6" width="9.6" height="8.6" rx="2"/><path d="M4.4 8.8v2.4a1.25 1.25 0 0 0 2.5 0V8.8z" fill="#3dcadb" stroke="none"/><path d="M12.3 8.6h5.4a2 2 0 0 1 2 2v4.6a2 2 0 0 1-2 2h-5.6"/><path d="M13.4 8.8v2.4a1.25 1.25 0 0 0 2.5 0V8.8z" fill="#3dcadb" stroke="none"/></svg>
<div class="clip" style="left:872px;width:143px"><span class="t" style="left:51.00px;top:309px;line-height:17px;font-size:15.4px;color:#424242;transform:scaleX(0.8817);transform-origin:0 0;">CHAIN CASE FRONT</span></div>
<span class="t" style="left:1031.50px;top:309px;line-height:17px;font-size:15.4px;color:#424242;letter-spacing:-0.186px;">Stock transfer</span>
<svg style="left:1189px;top:308px" width="17.5" height="15.8" viewBox="0 0 20.5 18" fill="none" stroke="#3dcadb" stroke-width="1.5" stroke-linejoin="round"><path d="M5 6.8V2.6a1.8 1.8 0 0 1 1.8-1.8h6.6a1.8 1.8 0 0 1 1.8 1.8v4.2"/><path d="M8.9 1v2.6a1.3 1.3 0 0 0 2.6 0V1z" fill="#3dcadb" stroke="none"/><rect x="0.85" y="8.6" width="9.6" height="8.6" rx="2"/><path d="M4.4 8.8v2.4a1.25 1.25 0 0 0 2.5 0V8.8z" fill="#3dcadb" stroke="none"/><path d="M12.3 8.6h5.4a2 2 0 0 1 2 2v4.6a2 2 0 0 1-2 2h-5.6"/><path d="M13.4 8.8v2.4a1.25 1.25 0 0 0 2.5 0V8.8z" fill="#3dcadb" stroke="none"/></svg>
<div class="clip" style="left:1172px;width:143px"><span class="t" style="left:51.00px;top:309px;line-height:17px;font-size:15.4px;color:#424242;transform:scaleX(0.9076);transform-origin:0 0;">Cars parts New york</span></div>
<svg style="left:1339px;top:308px" width="17.5" height="15.8" viewBox="0 0 20.5 18" fill="none" stroke="#3dcadb" stroke-width="1.5" stroke-linejoin="round"><path d="M5 6.8V2.6a1.8 1.8 0 0 1 1.8-1.8h6.6a1.8 1.8 0 0 1 1.8 1.8v4.2"/><path d="M8.9 1v2.6a1.3 1.3 0 0 0 2.6 0V1z" fill="#3dcadb" stroke="none"/><rect x="0.85" y="8.6" width="9.6" height="8.6" rx="2"/><path d="M4.4 8.8v2.4a1.25 1.25 0 0 0 2.5 0V8.8z" fill="#3dcadb" stroke="none"/><path d="M12.3 8.6h5.4a2 2 0 0 1 2 2v4.6a2 2 0 0 1-2 2h-5.6"/><path d="M13.4 8.8v2.4a1.25 1.25 0 0 0 2.5 0V8.8z" fill="#3dcadb" stroke="none"/></svg>
<div class="clip" style="left:1322px;width:143px"><span class="t" style="left:51.00px;top:309px;line-height:17px;font-size:15.4px;color:#424242;transform:scaleX(0.8817);transform-origin:0 0;">CHAIN CASE FRONT</span></div>
<div class="a" style="left:363px;top:384px;width:1161px;height:1px;background:#e6e7ed"></div>
<div class="a" style="left:384px;top:354px;width:17px;height:17px;border:2px solid #2f7bf5;border-radius:3px"></div>
<span class="t" style="left:431.20px;top:354px;line-height:17px;font-size:15.4px;color:#424242;transform:scaleX(1.0387);transform-origin:0 0;">25PR00002</span>
<svg style="left:589px;top:353px" width="17.5" height="15.8" viewBox="0 0 20.5 18" fill="none" stroke="#3dcadb" stroke-width="1.5" stroke-linejoin="round"><path d="M5 6.8V2.6a1.8 1.8 0 0 1 1.8-1.8h6.6a1.8 1.8 0 0 1 1.8 1.8v4.2"/><path d="M8.9 1v2.6a1.3 1.3 0 0 0 2.6 0V1z" fill="#3dcadb" stroke="none"/><rect x="0.85" y="8.6" width="9.6" height="8.6" rx="2"/><path d="M4.4 8.8v2.4a1.25 1.25 0 0 0 2.5 0V8.8z" fill="#3dcadb" stroke="none"/><path d="M12.3 8.6h5.4a2 2 0 0 1 2 2v4.6a2 2 0 0 1-2 2h-5.6"/><path d="M13.4 8.8v2.4a1.25 1.25 0 0 0 2.5 0V8.8z" fill="#3dcadb" stroke="none"/></svg>
<div class="clip" style="left:572px;width:143px"><span class="t" style="left:51.00px;top:354px;line-height:17px;font-size:15.4px;color:#424242;transform:scaleX(0.8817);transform-origin:0 0;">CHAIN CASE FRONT</span></div>
<span class="t" style="left:731.50px;top:354px;line-height:17px;font-size:15.4px;color:#424242;transform:scaleX(0.9375);transform-origin:0 0;">R1R-21006B0</span>
<svg style="left:889px;top:353px" width="17.5" height="15.8" viewBox="0 0 20.5 18" fill="none" stroke="#3dcadb" stroke-width="1.5" stroke-linejoin="round"><path d="M5 6.8V2.6a1.8 1.8 0 0 1 1.8-1.8h6.6a1.8 1.8 0 0 1 1.8 1.8v4.2"/><path d="M8.9 1v2.6a1.3 1.3 0 0 0 2.6 0V1z" fill="#3dcadb" stroke="none"/><rect x="0.85" y="8.6" width="9.6" height="8.6" rx="2"/><path d="M4.4 8.8v2.4a1.25 1.25 0 0 0 2.5 0V8.8z" fill="#3dcadb" stroke="none"/><path d="M12.3 8.6h5.4a2 2 0 0 1 2 2v4.6a2 2 0 0 1-2 2h-5.6"/><path d="M13.4 8.8v2.4a1.25 1.25 0 0 0 2.5 0V8.8z" fill="#3dcadb" stroke="none"/></svg>
<div class="clip" style="left:872px;width:143px"><span class="t" style="left:51.00px;top:354px;line-height:17px;font-size:15.4px;color:#424242;transform:scaleX(0.8817);transform-origin:0 0;">CHAIN CASE FRONT</span></div>
<span class="t" style="left:1031.50px;top:354px;line-height:17px;font-size:15.4px;color:#424242;letter-spacing:-0.186px;">Stock transfer</span>
<svg style="left:1189px;top:353px" width="17.5" height="15.8" viewBox="0 0 20.5 18" fill="none" stroke="#3dcadb" stroke-width="1.5" stroke-linejoin="round"><path d="M5 6.8V2.6a1.8 1.8 0 0 1 1.8-1.8h6.6a1.8 1.8 0 0 1 1.8 1.8v4.2"/><path d="M8.9 1v2.6a1.3 1.3 0 0 0 2.6 0V1z" fill="#3dcadb" stroke="none"/><rect x="0.85" y="8.6" width="9.6" height="8.6" rx="2"/><path d="M4.4 8.8v2.4a1.25 1.25 0 0 0 2.5 0V8.8z" fill="#3dcadb" stroke="none"/><path d="M12.3 8.6h5.4a2 2 0 0 1 2 2v4.6a2 2 0 0 1-2 2h-5.6"/><path d="M13.4 8.8v2.4a1.25 1.25 0 0 0 2.5 0V8.8z" fill="#3dcadb" stroke="none"/></svg>
<span class="t" style="left:1222.80px;top:354px;line-height:17px;font-size:15.4px;color:#424242;transform:scaleX(0.8996);transform-origin:0 0;">Car Parts</span>
<svg style="left:1339px;top:353px" width="17.5" height="15.8" viewBox="0 0 20.5 18" fill="none" stroke="#3dcadb" stroke-width="1.5" stroke-linejoin="round"><path d="M5 6.8V2.6a1.8 1.8 0 0 1 1.8-1.8h6.6a1.8 1.8 0 0 1 1.8 1.8v4.2"/><path d="M8.9 1v2.6a1.3 1.3 0 0 0 2.6 0V1z" fill="#3dcadb" stroke="none"/><rect x="0.85" y="8.6" width="9.6" height="8.6" rx="2"/><path d="M4.4 8.8v2.4a1.25 1.25 0 0 0 2.5 0V8.8z" fill="#3dcadb" stroke="none"/><path d="M12.3 8.6h5.4a2 2 0 0 1 2 2v4.6a2 2 0 0 1-2 2h-5.6"/><path d="M13.4 8.8v2.4a1.25 1.25 0 0 0 2.5 0V8.8z" fill="#3dcadb" stroke="none"/></svg>
<div class="clip" style="left:1322px;width:143px"><span class="t" style="left:51.00px;top:354px;line-height:17px;font-size:15.4px;color:#424242;transform:scaleX(0.8817);transform-origin:0 0;">CHAIN CASE FRONT</span></div>
<div class="a" style="left:363px;top:429px;width:1161px;height:1px;background:#e6e7ed"></div>
<div class="a" style="left:384px;top:399px;width:17px;height:17px;border:2px solid #2f7bf5;border-radius:3px"></div>
<span class="t" style="left:431.20px;top:399px;line-height:17px;font-size:15.4px;color:#424242;transform:scaleX(1.0496);transform-origin:0 0;">25SP00002</span>
<svg style="left:589px;top:398px" width="17.5" height="15.8" viewBox="0 0 20.5 18" fill="none" stroke="#3dcadb" stroke-width="1.5" stroke-linejoin="round"><path d="M5 6.8V2.6a1.8 1.8 0 0 1 1.8-1.8h6.6a1.8 1.8 0 0 1 1.8 1.8v4.2"/><path d="M8.9 1v2.6a1.3 1.3 0 0 0 2.6 0V1z" fill="#3dcadb" stroke="none"/><rect x="0.85" y="8.6" width="9.6" height="8.6" rx="2"/><path d="M4.4 8.8v2.4a1.25 1.25 0 0 0 2.5 0V8.8z" fill="#3dcadb" stroke="none"/><path d="M12.3 8.6h5.4a2 2 0 0 1 2 2v4.6a2 2 0 0 1-2 2h-5.6"/><path d="M13.4 8.8v2.4a1.25 1.25 0 0 0 2.5 0V8.8z" fill="#3dcadb" stroke="none"/></svg>
<div class="clip" style="left:572px;width:143px"><span class="t" style="left:51.00px;top:399px;line-height:17px;font-size:15.4px;color:#424242;transform:scaleX(0.8817);transform-origin:0 0;">CHAIN CASE REAR</span></div>
<span class="t" style="left:731.50px;top:399px;line-height:17px;font-size:15.4px;color:#424242;transform:scaleX(0.9375);transform-origin:0 0;">R1R-21005B0</span>
<svg style="left:889px;top:398px" width="17.5" height="15.8" viewBox="0 0 20.5 18" fill="none" stroke="#3dcadb" stroke-width="1.5" stroke-linejoin="round"><path d="M5 6.8V2.6a1.8 1.8 0 0 1 1.8-1.8h6.6a1.8 1.8 0 0 1 1.8 1.8v4.2"/><path d="M8.9 1v2.6a1.3 1.3 0 0 0 2.6 0V1z" fill="#3dcadb" stroke="none"/><rect x="0.85" y="8.6" width="9.6" height="8.6" rx="2"/><path d="M4.4 8.8v2.4a1.25 1.25 0 0 0 2.5 0V8.8z" fill="#3dcadb" stroke="none"/><path d="M12.3 8.6h5.4a2 2 0 0 1 2 2v4.6a2 2 0 0 1-2 2h-5.6"/><path d="M13.4 8.8v2.4a1.25 1.25 0 0 0 2.5 0V8.8z" fill="#3dcadb" stroke="none"/></svg>
<div class="clip" style="left:872px;width:143px"><span class="t" style="left:51.00px;top:399px;line-height:17px;font-size:15.4px;color:#424242;transform:scaleX(0.8817);transform-origin:0 0;">CHAIN CASE REAR</span></div>
<span class="t" style="left:1031.50px;top:399px;line-height:17px;font-size:15.4px;color:#424242;letter-spacing:-0.034px;">Stock receipt</span>
<svg style="left:1189px;top:398px" width="17.5" height="15.8" viewBox="0 0 20.5 18" fill="none" stroke="#3dcadb" stroke-width="1.5" stroke-linejoin="round"><path d="M5 6.8V2.6a1.8 1.8 0 0 1 1.8-1.8h6.6a1.8 1.8 0 0 1 1.8 1.8v4.2"/><path d="M8.9 1v2.6a1.3 1.3 0 0 0 2.6 0V1z" fill="#3dcadb" stroke="none"/><rect x="0.85" y="8.6" width="9.6" height="8.6" rx="2"/><path d="M4.4 8.8v2.4a1.25 1.25 0 0 0 2.5 0V8.8z" fill="#3dcadb" stroke="none"/><path d="M12.3 8.6h5.4a2 2 0 0 1 2 2v4.6a2 2 0 0 1-2 2h-5.6"/><path d="M13.4 8.8v2.4a1.25 1.25 0 0 0 2.5 0V8.8z" fill="#3dcadb" stroke="none"/></svg>
<span class="t" style="left:1222.80px;top:399px;line-height:17px;font-size:15.4px;color:#424242;transform:scaleX(0.8996);transform-origin:0 0;">Car Parts</span>
<svg style="left:1339px;top:398px" width="17.5" height="15.8" viewBox="0 0 20.5 18" fill="none" stroke="#3dcadb" stroke-width="1.5" stroke-linejoin="round"><path d="M5 6.8V2.6a1.8 1.8 0 0 1 1.8-1.8h6.6a1.8 1.8 0 0 1 1.8 1.8v4.2"/><path d="M8.9 1v2.6a1.3 1.3 0 0 0 2.6 0V1z" fill="#3dcadb" stroke="none"/><rect x="0.85" y="8.6" width="9.6" height="8.6" rx="2"/><path d="M4.4 8.8v2.4a1.25 1.25 0 0 0 2.5 0V8.8z" fill="#3dcadb" stroke="none"/><path d="M12.3 8.6h5.4a2 2 0 0 1 2 2v4.6a2 2 0 0 1-2 2h-5.6"/><path d="M13.4 8.8v2.4a1.25 1.25 0 0 0 2.5 0V8.8z" fill="#3dcadb" stroke="none"/></svg>
<span class="t" style="left:1373.00px;top:399px;line-height:17px;font-size:15.4px;color:#424242;transform:scaleX(0.8484);transform-origin:0 0;">STEEL WHEEL</span>
<div class="a" style="left:363px;top:474px;width:1161px;height:1px;background:#e6e7ed"></div>
<div class="a" style="left:384px;top:444px;width:17px;height:17px;border:2px solid #2f7bf5;border-radius:3px"></div>
<span class="t" style="left:431.20px;top:444px;line-height:17px;font-size:15.4px;color:#424242;transform:scaleX(1.0496);transform-origin:0 0;">25SP00002</span>
<svg style="left:589px;top:443px" width="17.5" height="15.8" viewBox="0 0 20.5 18" fill="none" stroke="#3dcadb" stroke-width="1.5" stroke-linejoin="round"><path d="M5 6.8V2.6a1.8 1.8 0 0 1 1.8-1.8h6.6a1.8 1.8 0 0 1 1.8 1.8v4.2"/><path d="M8.9 1v2.6a1.3 1.3 0 0 0 2.6 0V1z" fill="#3dcadb" stroke="none"/><rect x="0.85" y="8.6" width="9.6" height="8.6" rx="2"/><path d="M4.4 8.8v2.4a1.25 1.25 0 0 0 2.5 0V8.8z" fill="#3dcadb" stroke="none"/><path d="M12.3 8.6h5.4a2 2 0 0 1 2 2v4.6a2 2 0 0 1-2 2h-5.6"/><path d="M13.4 8.8v2.4a1.25 1.25 0 0 0 2.5 0V8.8z" fill="#3dcadb" stroke="none"/></svg>
<div class="clip" style="left:572px;width:143px"><span class="t" style="left:51.00px;top:444px;line-height:17px;font-size:15.4px;color:#424242;transform:scaleX(0.8817);transform-origin:0 0;">CHAIN CASE FRONT</span></div>
<span class="t" style="left:731.50px;top:444px;line-height:17px;font-size:15.4px;color:#424242;transform:scaleX(0.9375);transform-origin:0 0;">R1R-21006B0</span>
<svg style="left:889px;top:443px" width="17.5" height="15.8" viewBox="0 0 20.5 18" fill="none" stroke="#3dcadb" stroke-width="1.5" stroke-linejoin="round"><path d="M5 6.8V2.6a1.8 1.8 0 0 1 1.8-1.8h6.6a1.8 1.8 0 0 1 1.8 1.8v4.2"/><path d="M8.9 1v2.6a1.3 1.3 0 0 0 2.6 0V1z" fill="#3dcadb" stroke="none"/><rect x="0.85" y="8.6" width="9.6" height="8.6" rx="2"/><path d="M4.4 8.8v2.4a1.25 1.25 0 0 0 2.5 0V8.8z" fill="#3dcadb" stroke="none"/><path d="M12.3 8.6h5.4a2 2 0 0 1 2 2v4.6a2 2 0 0 1-2 2h-5.6"/><path d="M13.4 8.8v2.4a1.25 1.25 0 0 0 2.5 0V8.8z" fill="#3dcadb" stroke="none"/></svg>
<div class="clip" style="left:872px;width:143px"><span class="t" style="left:51.00px;top:444px;line-height:17px;font-size:15.4px;color:#424242;transform:scaleX(0.8817);transform-origin:0 0;">CHAIN CASE FRONT</span></div>
<span class="t" style="left:1031.50px;top:444px;line-height:17px;font-size:15.4px;color:#424242;letter-spacing:-0.034px;">Stock receipt</span>
<svg style="left:1189px;top:443px" width="17.5" height="15.8" viewBox="0 0 20.5 18" fill="none" stroke="#3dcadb" stroke-width="1.5" stroke-linejoin="round"><path d="M5 6.8V2.6a1.8 1.8 0 0 1 1.8-1.8h6.6a1.8 1.8 0 0 1 1.8 1.8v4.2"/><path d="M8.9 1v2.6a1.3 1.3 0 0 0 2.6 0V1z" fill="#3dcadb" stroke="none"/><rect x="0.85" y="8.6" width="9.6" height="8.6" rx="2"/><path d="M4.4 8.8v2.4a1.25 1.25 0 0 0 2.5 0V8.8z" fill="#3dcadb" stroke="none"/><path d="M12.3 8.6h5.4a2 2 0 0 1 2 2v4.6a2 2 0 0 1-2 2h-5.6"/><path d="M13.4 8.8v2.4a1.25 1.25 0 0 0 2.5 0V8.8z" fill="#3dcadb" stroke="none"/></svg>
<span class="t" style="left:1222.80px;top:444px;line-height:17px;font-size:15.4px;color:#424242;transform:scaleX(0.8996);transform-origin:0 0;">Car Parts</span>
<svg style="left:1339px;top:443px" width="17.5" height="15.8" viewBox="0 0 20.5 18" fill="none" stroke="#3dcadb" stroke-width="1.5" stroke-linejoin="round"><path d="M5 6.8V2.6a1.8 1.8 0 0 1 1.8-1.8h6.6a1.8 1.8 0 0 1 1.8 1.8v4.2"/><path d="M8.9 1v2.6a1.3 1.3 0 0 0 2.6 0V1z" fill="#3dcadb" stroke="none"/><rect x="0.85" y="8.6" width="9.6" height="8.6" rx="2"/><path d="M4.4 8.8v2.4a1.25 1.25 0 0 0 2.5 0V8.8z" fill="#3dcadb" stroke="none"/><path d="M12.3 8.6h5.4a2 2 0 0 1 2 2v4.6a2 2 0 0 1-2 2h-5.6"/><path d="M13.4 8.8v2.4a1.25 1.25 0 0 0 2.5 0V8.8z" fill="#3dcadb" stroke="none"/></svg>
<span class="t" style="left:1373.00px;top:444px;line-height:17px;font-size:15.4px;color:#424242;transform:scaleX(0.8484);transform-origin:0 0;">STEEL WHEEL</span>
<div class="a" style="left:363px;top:519px;width:1161px;height:1px;background:#e6e7ed"></div>
<div class="a" style="left:384px;top:489px;width:17px;height:17px;border:2px solid #2f7bf5;border-radius:3px"></div>
<span class="t" style="left:431.20px;top:489px;line-height:17px;font-size:15.4px;color:#424242;letter-spacing:0.062px;">25SV00001</span>
<svg style="left:589px;top:488px" width="17.5" height="15.8" viewBox="0 0 20.5 18" fill="none" stroke="#3dcadb" stroke-width="1.5" stroke-linejoin="round"><path d="M5 6.8V2.6a1.8 1.8 0 0 1 1.8-1.8h6.6a1.8 1.8 0 0 1 1.8 1.8v4.2"/><path d="M8.9 1v2.6a1.3 1.3 0 0 0 2.6 0V1z" fill="#3dcadb" stroke="none"/><rect x="0.85" y="8.6" width="9.6" height="8.6" rx="2"/><path d="M4.4 8.8v2.4a1.25 1.25 0 0 0 2.5 0V8.8z" fill="#3dcadb" stroke="none"/><path d="M12.3 8.6h5.4a2 2 0 0 1 2 2v4.6a2 2 0 0 1-2 2h-5.6"/><path d="M13.4 8.8v2.4a1.25 1.25 0 0 0 2.5 0V8.8z" fill="#3dcadb" stroke="none"/></svg>
<div class="clip" style="left:572px;width:143px"><span class="t" style="left:51.00px;top:489px;line-height:17px;font-size:15.4px;color:#424242;transform:scaleX(0.8817);transform-origin:0 0;">CHAIN CASE FRONT</span></div>
<span class="t" style="left:731.50px;top:489px;line-height:17px;font-size:15.4px;color:#424242;transform:scaleX(0.9375);transform-origin:0 0;">R1R-21006B0</span>
<svg style="left:889px;top:488px" width="17.5" height="15.8" viewBox="0 0 20.5 18" fill="none" stroke="#3dcadb" stroke-width="1.5" stroke-linejoin="round"><path d="M5 6.8V2.6a1.8 1.8 0 0 1 1.8-1.8h6.6a1.8 1.8 0 0 1 1.8 1.8v4.2"/><path d="M8.9 1v2.6a1.3 1.3 0 0 0 2.6 0V1z" fill="#3dcadb" stroke="none"/><rect x="0.85" y="8.6" width="9.6" height="8.6" rx="2"/><path d="M4.4 8.8v2.4a1.25 1.25 0 0 0 2.5 0V8.8z" fill="#3dcadb" stroke="none"/><path d="M12.3 8.6h5.4a2 2 0 0 1 2 2v4.6a2 2 0 0 1-2 2h-5.6"/><path d="M13.4 8.8v2.4a1.25 1.25 0 0 0 2.5 0V8.8z" fill="#3dcadb" stroke="none"/></svg>
<div class="clip" style="left:872px;width:143px"><span class="t" style="left:51.00px;top:489px;line-height:17px;font-size:15.4px;color:#424242;transform:scaleX(0.8817);transform-origin:0 0;">CHAIN CASE FRONT</span></div>
<span class="t" style="left:1031.50px;top:489px;line-height:17px;font-size:15.4px;color:#424242;transform:scaleX(0.9526);transform-origin:0 0;">Stock issue</span>
<svg style="left:1189px;top:488px" width="17.5" height="15.8" viewBox="0 0 20.5 18" fill="none" stroke="#3dcadb" stroke-width="1.5" stroke-linejoin="round"><path d="M5 6.8V2.6a1.8 1.8 0 0 1 1.8-1.8h6.6a1.8 1.8 0 0 1 1.8 1.8v4.2"/><path d="M8.9 1v2.6a1.3 1.3 0 0 0 2.6 0V1z" fill="#3dcadb" stroke="none"/><rect x="0.85" y="8.6" width="9.6" height="8.6" rx="2"/><path d="M4.4 8.8v2.4a1.25 1.25 0 0 0 2.5 0V8.8z" fill="#3dcadb" stroke="none"/><path d="M12.3 8.6h5.4a2 2 0 0 1 2 2v4.6a2 2 0 0 1-2 2h-5.6"/><path d="M13.4 8.8v2.4a1.25 1.25 0 0 0 2.5 0V8.8z" fill="#3dcadb" stroke="none"/></svg>
<span class="t" style="left:1222.80px;top:489px;line-height:17px;font-size:15.4px;color:#424242;transform:scaleX(0.8996);transform-origin:0 0;">Car Parts</span>
<svg style="left:1339px;top:487.7px" width="17.500" height="16" viewBox="0 0 17.500 16" fill="none" stroke="#3dcadb" stroke-width="1.350" stroke-linejoin="round" stroke-linecap="round"><path d="M0.700 0.800h1.200c.5 0 .8.300.9.800l1.600 7.800c.2 1 .9 1.600 1.900 1.600h8.600"/><path d="M3.300 2.200h13.400l-1.100 4.600c-.2.700-.7 1.100-1.400 1.100H4.600"/><circle cx="5.100" cy="14.250" r="1.250" fill="#3dcadb" stroke="none"/><circle cx="14.200" cy="14.250" r="1.250" fill="#3dcadb" stroke="none"/></svg>
<div class="clip" style="left:1322px;width:143.500px"><span class="t" style="left:51.00px;top:489px;line-height:17px;font-size:15.4px;color:#424242;transform:scaleX(1.0663);transform-origin:0 0;">PU2023-00001</span></div>
<div class="a" style="left:384px;top:534px;width:17px;height:17px;border:2px solid #2f7bf5;border-radius:3px"></div>
<span class="t" style="left:431.20px;top:534px;line-height:17px;font-size:15.4px;color:#424242;letter-spacing:0.062px;">25SP00001</span>
<svg style="left:589px;top:533px" width="17.5" height="15.8" viewBox="0 0 20.5 18" fill="none" stroke="#3dcadb" stroke-width="1.5" stroke-linejoin="round"><path d="M5 6.8V2.6a1.8 1.8 0 0 1 1.8-1.8h6.6a1.8 1.8 0 0 1 1.8 1.8v4.2"/><path d="M8.9 1v2.6a1.3 1.3 0 0 0 2.6 0V1z" fill="#3dcadb" stroke="none"/><rect x="0.85" y="8.6" width="9.6" height="8.6" rx="2"/><path d="M4.4 8.8v2.4a1.25 1.25 0 0 0 2.5 0V8.8z" fill="#3dcadb" stroke="none"/><path d="M12.3 8.6h5.4a2 2 0 0 1 2 2v4.6a2 2 0 0 1-2 2h-5.6"/><path d="M13.4 8.8v2.4a1.25 1.25 0 0 0 2.5 0V8.8z" fill="#3dcadb" stroke="none"/></svg>
<div class="clip" style="left:572px;width:143px"><span class="t" style="left:51.00px;top:534px;line-height:17px;font-size:15.4px;color:#424242;transform:scaleX(0.8817);transform-origin:0 0;">CHAIN CASE FRONT</span></div>
<span class="t" style="left:731.50px;top:534px;line-height:17px;font-size:15.4px;color:#424242;transform:scaleX(0.9375);transform-origin:0 0;">R1R-21006B0</span>
<svg style="left:889px;top:533px" width="17.5" height="15.8" viewBox="0 0 20.5 18" fill="none" stroke="#3dcadb" stroke-width="1.5" stroke-linejoin="round"><path d="M5 6.8V2.6a1.8 1.8 0 0 1 1.8-1.8h6.6a1.8 1.8 0 0 1 1.8 1.8v4.2"/><path d="M8.9 1v2.6a1.3 1.3 0 0 0 2.6 0V1z" fill="#3dcadb" stroke="none"/><rect x="0.85" y="8.6" width="9.6" height="8.6" rx="2"/><path d="M4.4 8.8v2.4a1.25 1.25 0 0 0 2.5 0V8.8z" fill="#3dcadb" stroke="none"/><path d="M12.3 8.6h5.4a2 2 0 0 1 2 2v4.6a2 2 0 0 1-2 2h-5.6"/><path d="M13.4 8.8v2.4a1.25 1.25 0 0 0 2.5 0V8.8z" fill="#3dcadb" stroke="none"/></svg>
<div class="clip" style="left:872px;width:143px"><span class="t" style="left:51.00px;top:534px;line-height:17px;font-size:15.4px;color:#424242;transform:scaleX(0.8817);transform-origin:0 0;">CHAIN CASE FRONT</span></div>
<span class="t" style="left:1031.50px;top:534px;line-height:17px;font-size:15.4px;color:#424242;letter-spacing:-0.034px;">Stock receipt</span>
<svg style="left:1189px;top:533px" width="17.5" height="15.8" viewBox="0 0 20.5 18" fill="none" stroke="#3dcadb" stroke-width="1.5" stroke-linejoin="round"><path d="M5 6.8V2.6a1.8 1.8 0 0 1 1.8-1.8h6.6a1.8 1.8 0 0 1 1.8 1.8v4.2"/><path d="M8.9 1v2.6a1.3 1.3 0 0 0 2.6 0V1z" fill="#3dcadb" stroke="none"/><rect x="0.85" y="8.6" width="9.6" height="8.6" rx="2"/><path d="M4.4 8.8v2.4a1.25 1.25 0 0 0 2.5 0V8.8z" fill="#3dcadb" stroke="none"/><path d="M12.3 8.6h5.4a2 2 0 0 1 2 2v4.6a2 2 0 0 1-2 2h-5.6"/><path d="M13.4 8.8v2.4a1.25 1.25 0 0 0 2.5 0V8.8z" fill="#3dcadb" stroke="none"/></svg>
<span class="t" style="left:1222.80px;top:534px;line-height:17px;font-size:15.4px;color:#424242;transform:scaleX(0.8996);transform-origin:0 0;">Car Parts</span>
<svg style="left:1339px;top:533px" width="17.5" height="15.8" viewBox="0 0 20.5 18" fill="none" stroke="#3dcadb" stroke-width="1.5" stroke-linejoin="round"><path d="M5 6.8V2.6a1.8 1.8 0 0 1 1.8-1.8h6.6a1.8 1.8 0 0 1 1.8 1.8v4.2"/><path d="M8.9 1v2.6a1.3 1.3 0 0 0 2.6 0V1z" fill="#3dcadb" stroke="none"/><rect x="0.85" y="8.6" width="9.6" height="8.6" rx="2"/><path d="M4.4 8.8v2.4a1.25 1.25 0 0 0 2.5 0V8.8z" fill="#3dcadb" stroke="none"/><path d="M12.3 8.6h5.4a2 2 0 0 1 2 2v4.6a2 2 0 0 1-2 2h-5.6"/><path d="M13.4 8.8v2.4a1.25 1.25 0 0 0 2.5 0V8.8z" fill="#3dcadb" stroke="none"/></svg>
<div class="clip" style="left:1322px;width:143px"><span class="t" style="left:51.00px;top:534px;line-height:17px;font-size:15.4px;color:#424242;transform:scaleX(0.8817);transform-origin:0 0;">CHAIN CASE FRONT</span></div>
<div class="a" style="left:363px;top:204px;width:1160px;height:363px;border:3px solid #fe0000;border-radius:2px"></div>
<div class="a" style="left:366px;top:879px;width:414px;height:8px;border-radius:4px;background:#dedede"></div>
<svg style="left:387px;top:904px" width="22" height="16" viewBox="0 0 22 16" fill="none" stroke="#6a6a6a" stroke-width="1.050" stroke-linejoin="round"><path d="M5.600 15a4.900 4.900 0 0 1-1-9.700A6.400 6.400 0 0 1 16.800 5.600a4.700 4.700 0 0 1-.4 9.400z"/><path d="M7.800 9.400l2.200 2.200 4-4"/></svg>
<svg style="left:433px;top:903px" width="16" height="19" viewBox="0 0 16 19" fill="none" stroke="#6a6a6a" stroke-width="1.050" stroke-linejoin="round"><path d="M4.400 0.800h7.200l-.8 1.600v5l3.400 3.200v1.200H1.800v-1.200L5.200 7.400v-5zM8 11.800v6.600"/></svg>
<span class="t" style="left:473.60px;top:903px;line-height:17px;font-size:15.4px;color:#424242;transform:scaleX(0.9721);transform-origin:0 0;">Auto</span>
<svg style="left:512.500px;top:910px" width="9.500" height="5.500" viewBox="0 0 10 6"><path d="M0.200 0.200h9.600L5 5.800z" fill="#757575"/></svg>
<span class="t" style="left:545.40px;top:903px;line-height:17px;font-size:15.4px;color:#424242;transform:scaleX(0.8838);transform-origin:0 0;">1–8 of 8</span>
<div class="a" style="left:0;top:0;width:1538px;height:1px;background:#f8faf1"></div>
<div class="a" style="left:0;top:1px;width:1538px;height:1px;background:#dfe3d4"></div>
</div></body></html>
